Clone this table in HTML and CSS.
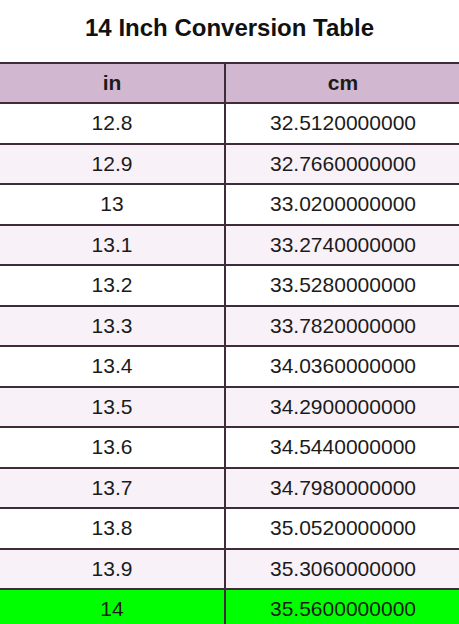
FILE: index.html
```
<!DOCTYPE html>
<html>
<head>
<meta charset="utf-8">
<link rel="stylesheet" href="styles.css">
</head>
<body>
<div class="title">14 Inch Conversion Table</div>
<div class="wrap">
<table class="conv">
<thead>
<tr><th class="c1">in</th><th class="c2">cm</th></tr>
</thead>
<tbody>
<tr><td>12.8</td><td>32.5120000000</td></tr>
<tr class="alt"><td>12.9</td><td>32.7660000000</td></tr>
<tr><td>13</td><td>33.0200000000</td></tr>
<tr class="alt"><td>13.1</td><td>33.2740000000</td></tr>
<tr><td>13.2</td><td>33.5280000000</td></tr>
<tr class="alt"><td>13.3</td><td>33.7820000000</td></tr>
<tr><td>13.4</td><td>34.0360000000</td></tr>
<tr class="alt"><td>13.5</td><td>34.2900000000</td></tr>
<tr><td>13.6</td><td>34.5440000000</td></tr>
<tr class="alt"><td>13.7</td><td>34.7980000000</td></tr>
<tr><td>13.8</td><td>35.0520000000</td></tr>
<tr class="alt"><td>13.9</td><td>35.3060000000</td></tr>
<tr class="hit"><td>14</td><td>35.5600000000</td></tr>
</tbody>
</table>
</div>
</body>
</html>
```
FILE: styles.css
```
html, body {
  margin: 0;
  padding: 0;
  background: #ffffff;
  overflow: hidden;
}
body {
  font-family: "Liberation Sans", Arial, sans-serif;
  color: #1b1b1b;
  width: 459px;
  height: 624px;
}
.title {
  font-weight: bold;
  font-size: 24px;
  line-height: 28px;
  text-align: center;
  padding-top: 14px;
  height: 48px;
  color: #111;
}
.wrap {
  margin-left: -2px;
  width: 464px;
}
.conv {
  border-collapse: collapse;
  width: 464px;
  table-layout: fixed;
}
.conv .c1 { width: 224px; }
.conv th, .conv td {
  border: 2px solid #3e2c3b;
  text-align: center;
  font-size: 21px;
  padding: 0;
  height: 38.5px;
}
.conv th {
  background: #d1b8d0;
  font-weight: bold;
  height: 38px;
}
.conv tr.alt td { background: #f9f1f8; }
.conv tr.hit td { background: #00ff00; }
```
